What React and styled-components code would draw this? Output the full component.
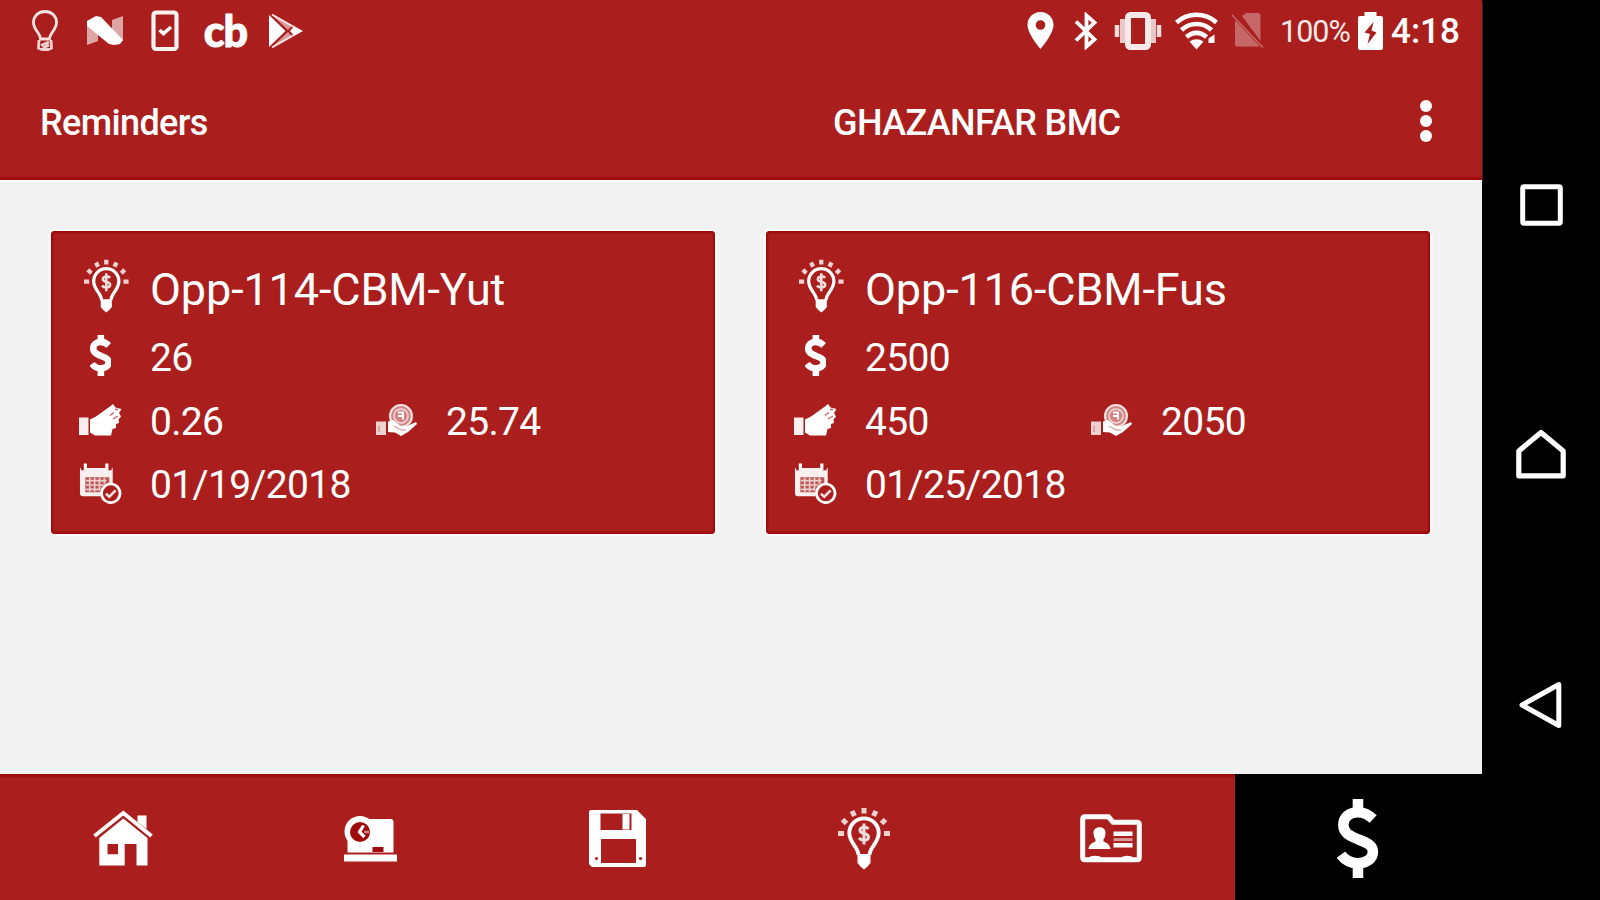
import React from 'react';
import styled, { createGlobalStyle } from 'styled-components'

const RED = '#aa1f1e';
const DEEP_RED = '#a0090b';

let GlobalStyle = createGlobalStyle`
    body {
        margin: 0;
        background: #000;
        font-family: Roboto, 'Liberation Sans', sans-serif;
        color: #fff;
    }
`

/* ---------- icons ---------- */

let BulbOutlineIcon = () => (
    <svg width='26' height='41' viewBox='0 0 26 41' fill='none' stroke='#fff' strokeWidth='2.8'>
        <path d='M8.500 29C8.500 23 1.500 20 1.500 12.500C1.500 6 6.500 1.500 13 1.500S24.500 6 24.500 12.500C24.500 20 17.500 23 17.500 29Z' opacity='.88' />
        <path d='M7 30L6.500 38L10 39.500H16L19.500 38L19 30M9 35.500L17 32M11 38L17 35' opacity='.8' />
    </svg>
)

let NougatIcon = () => (
    <svg width='36' height='29' viewBox='0 0 36 29' fill='#fff'>
        <path d='M0 5L11 12V25L0 29ZM25 4L36 0V25L25 16Z' opacity='.6' />
        <path d='M0 5L9 0L14 1L36 24L33 28L27 29L22 28L0 10Z' />
    </svg>
)

let PhoneCheckIcon = () => (
    <svg width='28' height='42' viewBox='0 0 28 42' fill='none' stroke='#fff'>
        <rect x='2.500' y='2.500' width='23' height='36.500' rx='2.500' strokeWidth='4.200' opacity='.94' />
        <path d='M8.500 20L12.500 23.500L20 17' strokeWidth='3.600' />
    </svg>
)

let PlayStoreIcon = () => (
    <svg width='35' height='36' viewBox='0 0 35 36' fill='#fff'>
        <path d='M1 2L17.500 18L1 34Z' />
        <path d='M3.500 1.500L24 12.500L20 17L3.500 1.500ZM3.500 34.500L24 23.500L20 19L3.500 34.500Z' opacity='.55' />
        <path d='M4 1.500L33 18L4 34.500' fill='none' stroke='#fff' strokeWidth='2' opacity='.85' />
        <path d='M26 13.500L34.500 18L26 22.500L22 18Z' />
    </svg>
)

let LocationIcon = () => (
    <svg width='27' height='37' viewBox='0 0 27 37' fill='#fff'>
        <path fillRule='evenodd' d='M13.500 0C6 0 .5 5.600 .5 13C.5 22 13.500 37 13.500 37S26.500 22 26.500 13C26.500 5.600 21 0 13.500 0ZM13.500 8.200A4.800 4.800 0 1 1 13.500 17.800A4.800 4.800 0 1 1 13.500 8.200Z' />
    </svg>
)

let BluetoothIcon = () => (
    <svg width='24' height='38' viewBox='0 0 24 38' fill='none' stroke='#fff' strokeWidth='3.800'>
        <path d='M2 9.500L20.500 27.500L12.500 34.500V3.500L20.500 10.500L2 28.500' />
    </svg>
)

let VibrateIcon = () => (
    <svg width='48' height='38' viewBox='0 0 48 38'>
        <rect x='14' y='3' width='20' height='32' rx='2.500' fill='none' stroke='#fff' strokeWidth='6' opacity='.9' />
        <path d='M8.500 7V31M39.500 7V31' stroke='#fff' strokeWidth='5' opacity='.75' />
        <path d='M3 13V25M45 13V25' stroke='#fff' strokeWidth='4.500' opacity='.85' />
    </svg>
)

let WifiIcon = () => (
    <svg width='43' height='38' viewBox='0 0 43 38' fill='none' stroke='#fff' strokeWidth='4.600'>
        <path d='M1.500 10.500C13 .2 30 .2 41.500 10.500' />
        <path d='M6.500 18C15 10 28 10 36.500 18' />
        <path d='M11.500 25C17.500 19.500 25.500 19.500 31.500 25' />
        <path d='M14.500 29.500Q21.500 25 28.500 29.500L21.500 37.500Z' fill='#fff' stroke='none' />
        <path d='M33.500 31V26.500L39.500 22.500V31Z' fill='#fff' stroke='none' />
    </svg>
)

let NoSimIcon = () => (
    <svg width='32' height='36' viewBox='0 0 32 36' fill='#fff' opacity='.32'>
        <path d='M10 3L14 0H26Q28.500 0 28.500 2.500V28ZM3 7L28 33.500H5.500Q3 33.500 3 31Z' />
        <path d='M0 2L31 34.500' fill='none' stroke='#fff' strokeWidth='1.500' />
    </svg>
)

let BatteryIcon = () => (
    <svg width='27' height='38' viewBox='0 0 27 38' fill='#fff'>
        <path fillRule='evenodd' d='M7.500 4V0H19.500V4H24Q26 4 26 6V36Q26 38 24 38H3Q1 38 1 36V6Q1 4 3 4ZM16.500 10L7.500 20.500L13 22L10.500 32L19.500 20.500L14.500 18.500Z' />
    </svg>
)

let DotsIcon = () => (
    <svg width='12' height='42' viewBox='0 0 12 42' fill='#fff'>
        <circle cx='6' cy='6' r='6' />
        <circle cx='6' cy='21' r='6' />
        <circle cx='6' cy='36' r='6' />
    </svg>
)

let IdeaIcon = ({ height }) => (
    <svg height={height} width={height * 52 / 63} viewBox='0 0 52 63' fill='none' stroke='#fff'>
        <path d='M20.500 48C20.500 40 11.300 36 11.300 26A14.700 14.700 0 0 1 40.700 26C40.700 36 31.500 40 31.500 48' strokeWidth='3.800' />
        <path d='M19.500 47H32.500V56L29.500 59.500L26 62.500L22.500 59.500L19.500 56Z' fill='#fff' stroke='none' />
        <path d='M26 1V6.500M14 4L16.500 9M38 4L35.500 9M4.500 12.500L8.500 16.500M47.500 12.500L43.500 16.500M0 26.500H6M52 26.500H46' strokeWidth='5' opacity='.8' />
        <path d='M30.500 22C28.500 19.500 22 19.500 22 23.500C22 27.500 30.500 25.500 30.500 30C30.500 34 23.500 34 21 31M26 16.500V37.500' strokeWidth='3' opacity='.85' />
    </svg>
)

let DollarIcon = ({ height, weight }) => (
    <svg height={height} width={height * 43 / 81} viewBox='0 0 43 81' fill='none' stroke='#fff' strokeWidth={weight}>
        <path d='M37 20.500C32 15.800 27 13.500 21.500 13.500C12.500 13.500 6.500 19 6.500 26.500C6.500 35.500 14 38 22 41.500C31 45 36.800 47.500 36.800 54C36.800 61 30.500 65.800 21.500 65.800C14 65.800 8 62.500 4 57' />
        <path d='M21.500 0V11M21.500 68V81' />
    </svg>
)

let GiveIcon = () => (
    <svg width='43' height='33' viewBox='0 0 43 33' fill='#fff'>
        <path d='M0 13.500H9.500V31H0Z' opacity='.93' />
        <path d='M11 15.500L17 12.500L31 2.500L34 0L36.500 3.500L42.500 5L40 9L42 12.500L39.500 15.500L40 19L37 20L37 24L33.500 25L32 31.500H16L11 28.500Z' />
        <path d='M31 11.500L35 8.500M36 5.500H39M34 15L39 12' stroke={RED} strokeWidth='1.300' opacity='.7' />
    </svg>
)

let ReceiveIcon = () => (
    <svg width='43' height='33' viewBox='0 0 43 33' fill='#fff'>
        <path d='M1 17.500H11V31H1Z' opacity='.8' />
        <path d='M4 21.500V28' stroke={RED} opacity='.5' />
        <circle cx='26' cy='12' r='11' fillOpacity='.45' stroke='#fff' strokeWidth='2.200' strokeOpacity='.8' />
        <circle cx='26' cy='12' r='7' fill='none' stroke='#fff' strokeWidth='1.500' opacity='.7' />
        <path d='M23 8.500H28V15.500M23 12H28' stroke='#fff' strokeWidth='1.800' fill='none' />
        <path d='M13 17.500L18 16L25 21.500L31 22.500L41 18L42 20L33 28L26 32L20 28.500L13 28Z' />
        <path d='M19 22L26 26H31' stroke={RED} fill='none' opacity='.55' />
    </svg>
)

let CalendarIcon = () => (
    <svg width='44' height='42' viewBox='0 0 44 42' fill='none' stroke='#fff'>
        <path d='M1 4.500H34.500V20L28 22L22 28V33.500H4Q1 33.500 1 30.500Z' fill='#fff' stroke='none' opacity='.93' />
        <path d='M6.500 14H31V20L27 22L21.500 29.500H6.500Z' fill={RED} stroke='none' opacity='.75' />
        <path d='M7 17.500H28M7 22H25M7 26.500H21M11 14.500V29M16 14.500V29M21 14.500V28M26 14.500V21' strokeWidth='1.700' opacity='.72' />
        <path d='M4.500 1V7M31 1V7' stroke={RED} strokeWidth='5' />
        <path d='M6.500 0V7M28.500 0V7' strokeWidth='3.200' />
        <circle cx='32.500' cy='30.500' r='9.500' fill={RED} strokeWidth='2.800' />
        <path d='M27.500 31L31 34L37.500 27.500' strokeWidth='2.800' opacity='.85' />
    </svg>
)

let HouseIcon = () => (
    <svg width='60' height='56' viewBox='0 0 60 56' fill='#fff'>
        <path d='M44.500 5.500H53.500V19L44.500 12Z' />
        <path d='M1.500 26L30.300 3L58.500 26' fill='none' stroke='#fff' strokeWidth='4' />
        <path fillRule='evenodd' d='M30.300 8.500L54.500 28V55.500H43.500V34H31.700V55.500H6.300V28ZM14.500 34V44.300H25V34Z' />
    </svg>
)

let TimesheetIcon = () => (
    <svg width='53' height='47' viewBox='0 0 53 47' fill='#fff'>
        <path d='M3.500 15L22 4H46.500Q49.500 4 49.500 7V37.500H3.500Z' />
        <circle cx='16' cy='16.500' r='15.500' />
        <circle cx='16' cy='17' r='10' fill={DEEP_RED} />
        <path d='M19.500 10.500L15.500 17L20.500 22' fill='none' stroke='#fff' strokeWidth='3.200' />
        <path d='M20 17H25' stroke='#fff' strokeWidth='2.500' opacity='.5' />
        <path d='M28.500 32H39.500V37H28.500Z' fill={DEEP_RED} />
        <path d='M0 39.500H53V46.500H0Z' />
    </svg>
)

let FloppyIcon = () => (
    <svg width='57' height='57' viewBox='0 0 57 57' fill='#fff'>
        <path fillRule='evenodd' d='M2 0H48L57 9V55Q57 57 55 57H3L0 54V2Q0 0 2 0ZM11.500 3.500V20H42.500V3.500ZM12 29V53H47V29Z' />
        <rect x='33.500' y='4' width='7' height='15.500' />
        <circle cx='7.500' cy='48.500' r='1.600' fill={RED} />
        <circle cx='51.500' cy='48.500' r='1.600' fill={RED} />
    </svg>
)

let ContactIcon = () => (
    <svg width='62' height='49' viewBox='0 0 62 49' fill='#fff'>
        <path d='M5 2.800H28.500L33 8.200H57Q59.300 8.200 59.300 10.500V43.500Q59.300 45.800 57 45.800H5Q2.700 45.800 2.700 43.500V5Q2.700 2.800 5 2.800Z' fill='none' stroke='#fff' strokeWidth='5' />
        <path d='M13.500 18.500C13.500 11.500 25.500 11.500 25.500 18.500C25.500 22 24.500 24 23.500 25.500V27.500C27 29 30 30.500 30.500 35H8.500C9 30.500 12 29 15.500 27.500V25.500C14.500 24 13.500 22 13.500 18.500Z' />
        <path d='M33.500 19.800H52.500M33.500 31.300H52.500' stroke='#fff' strokeWidth='4.600' />
        <path d='M33.500 25.600H52.500' stroke='#fff' strokeWidth='3' opacity='.55' />
        <path d='M8.500 44C10 41 20 41 22 44ZM41 44C43 41 51.500 41 53.500 44Z' />
    </svg>
)

let RecentsIcon = () => (
    <svg width='43' height='42' viewBox='0 0 43 42'>
        <rect x='2.700' y='2.700' width='37.600' height='36.600' rx='1.500' fill='none' stroke='#fff' strokeWidth='5' />
    </svg>
)

let NavHomeIcon = () => (
    <svg width='50' height='50' viewBox='0 0 50 50'>
        <path d='M2.800 22L25 3.500L47.200 22V46.800H2.800Z' fill='none' stroke='#fff' strokeWidth='5.200' strokeLinejoin='round' />
    </svg>
)

let BackIcon = () => (
    <svg width='45' height='48' viewBox='0 0 45 48'>
        <path d='M3 24L39.800 3.500V44.500Z' fill='none' stroke='#fff' strokeWidth='5' strokeLinejoin='round' />
    </svg>
)

/* ---------- data ---------- */

const OPPORTUNITIES = [
    { name: 'Opp-114-CBM-Yut', total: '26', paid: '0.26', balance: '25.74', date: '01/19/2018' },
    { name: 'Opp-116-CBM-Fus', total: '2500', paid: '450', balance: '2050', date: '01/25/2018' }
]

const TABS = [
    { id: 'home', icon: <HouseIcon /> },
    { id: 'time', icon: <TimesheetIcon /> },
    { id: 'save', icon: <FloppyIcon /> },
    { id: 'ideas', icon: <IdeaIcon height={63} /> },
    { id: 'contacts', icon: <ContactIcon /> },
    { id: 'money', icon: <DollarIcon height={79} weight={10.800} />, active: true }
]

/* ---------- components ---------- */

let OpportunityCard = ({ item }) => (
    <Card>
        <Row height={68}>
            <IconCell $wide $lift={6}><IdeaIcon height={54} /></IconCell>
            <Title>{item.name}</Title>
        </Row>
        <Row height={66}>
            <IconCell $lift={2}><DollarIcon height={41} weight={13} /></IconCell>
            <Value>{item.total}</Value>
        </Row>
        <Row height={62}>
            <IconCell><GiveIcon /></IconCell>
            <Value>{item.paid}</Value>
            <IconCell><ReceiveIcon /></IconCell>
            <Value>{item.balance}</Value>
        </Row>
        <Row height={65}>
            <IconCell><CalendarIcon /></IconCell>
            <Value>{item.date}</Value>
        </Row>
    </Card>
)

let App = () => (
    <Device>
        <GlobalStyle />
        <Screen>
            <Header>
                <StatusBar>
                    <Slot width={60}><BulbOutlineIcon /></Slot>
                    <Slot width={60}><NougatIcon /></Slot>
                    <Slot width={60}><PhoneCheckIcon /></Slot>
                    <Slot width={61}><Brand>cb</Brand></Slot>
                    <Slot width={59}><PlayStoreIcon /></Slot>
                    <SystemArea>
                        <Slot width={45}><LocationIcon /></Slot>
                        <Slot width={46}><BluetoothIcon /></Slot>
                        <Slot width={57}><VibrateIcon /></Slot>
                        <Slot width={60}><WifiIcon /></Slot>
                        <Slot width={43}><NoSimIcon /></Slot>
                        <Percent>100%</Percent>
                        <Slot width={32}><BatteryIcon /></Slot>
                        <Clock>4:18</Clock>
                    </SystemArea>
                </StatusBar>
                <AppBar>
                    <PageTitle>Reminders</PageTitle>
                    <Account>GHAZANFAR BMC</Account>
                    <MenuButton><DotsIcon /></MenuButton>
                </AppBar>
            </Header>
            <Content>
                {OPPORTUNITIES.map(item => <OpportunityCard key={item.name} item={item} />)}
            </Content>
            <TabBar>
                {TABS.map(tab => <Tab key={tab.id} $active={tab.active}>{tab.icon}</Tab>)}
            </TabBar>
        </Screen>
        <NavBar>
            <RecentsIcon />
            <NavHomeIcon />
            <BackIcon />
        </NavBar>
    </Device>
)

/* ---------- styles ---------- */

let Device = styled.div`
    display: flex;
    width: 1600px;
    height: 900px;
    overflow: hidden;
    background: #000;
`

let Screen = styled.div`
    display: flex;
    flex-direction: column;
    width: 1482px;
    background: #f2f2f2;
`

let Header = styled.header`
    height: 180px;
    box-sizing: border-box;
    background: ${RED};
    box-shadow: inset 0 -4px 2px -1px ${DEEP_RED}, 0 2px 1px #fafafa;
`

let StatusBar = styled.div`
    display: flex;
    align-items: center;
    height: 61px;
    padding-left: 15px;
`

let Slot = styled.span.withConfig({ shouldForwardProp: prop => prop !== 'width' })`
    display: flex;
    justify-content: center;
    align-items: center;
    flex: none;
    width: ${({width}) => width}px;
`

let Brand = styled.span`
    font-family: Lato, sans-serif;
    font-weight: 900;
    font-size: 43px;
    line-height: 43px;
    letter-spacing: -1px;
    -webkit-text-stroke: 1px #fff;
`

let SystemArea = styled.div`
    display: flex;
    align-items: center;
    width: 464px;
    margin-left: auto;
`

let Percent = styled.span`
    width: 74px;
    margin: 2px 0 0 11px;
    font-size: 30.500px;
    line-height: 36px;
    letter-spacing: -1px;
    opacity: .9;
`

let Clock = styled.span`
    margin: 2px 0 0 5px;
    font-size: 35px;
    font-weight: 500;
    line-height: 40px;
`

let AppBar = styled.div`
    display: flex;
    align-items: center;
    height: 119px;
    padding: 0 50px 0 40px;
    font-size: 36px;
    font-weight: 500;
    letter-spacing: -0.620px;
`

let PageTitle = styled.h1`
    width: 793px;
    margin: 4px 0 0;
    font-size: inherit;
    font-weight: inherit;
`

let Account = styled.span`
    margin-top: 4px;
    white-space: nowrap;
`

let MenuButton = styled.button`
    display: flex;
    margin-left: auto;
    padding: 0;
    border: 0;
    background: none;
    cursor: pointer;
`

let Content = styled.main`
    display: grid;
    grid-template-columns: 664px 664px;
    gap: 51px;
    align-content: start;
    height: 594px;
    box-sizing: border-box;
    padding: 51px 51px 0;
`

let Card = styled.section`
    height: 303px;
    box-sizing: border-box;
    padding: 24px 20px 0 28px;
    border-radius: 4px;
    background: ${RED};
    box-shadow: inset 0 0 2px 2px ${DEEP_RED}, 0 0 2px 2px #fafafa;
`

let Row = styled.div.withConfig({ shouldForwardProp: prop => prop !== 'height' })`
    display: flex;
    align-items: center;
    height: ${({height}) => height}px;
`

let IconCell = styled.span`
    display: flex;
    justify-content: center;
    flex: none;
    width: ${({$wide}) => $wide ? 55 : 43}px;
    margin-right: ${({$wide}) => $wide ? 16 : 28}px;
    padding-bottom: ${({$lift}) => $lift || 0}px;
`

let Title = styled.h2`
    margin: 0;
    padding-top: 2px;
    font-size: 45px;
    font-weight: 400;
    line-height: 52px;
    letter-spacing: -0.120px;
    white-space: nowrap;
`

let Value = styled.span`
    width: 225px;
    padding-top: 3px;
    font-size: 39px;
    line-height: 46px;
    letter-spacing: -0.680px;
`

let TabBar = styled.nav`
    display: grid;
    grid-template-columns: repeat(6, 247px);
    height: 126px;
    background: ${RED};
    box-shadow: inset 0 4px 2px -1px ${DEEP_RED};
`

let Tab = styled.a`
    display: flex;
    justify-content: center;
    align-items: center;
    padding: 2px 1px 0 0;
    background: ${({$active}) => $active ? '#000' : 'none'};
    cursor: pointer;
`

let NavBar = styled.aside`
    display: flex;
    flex-direction: column;
    align-items: center;
    justify-content: space-between;
    width: 118px;
    box-sizing: border-box;
    padding: 184px 0 171px;
`

export default App;
